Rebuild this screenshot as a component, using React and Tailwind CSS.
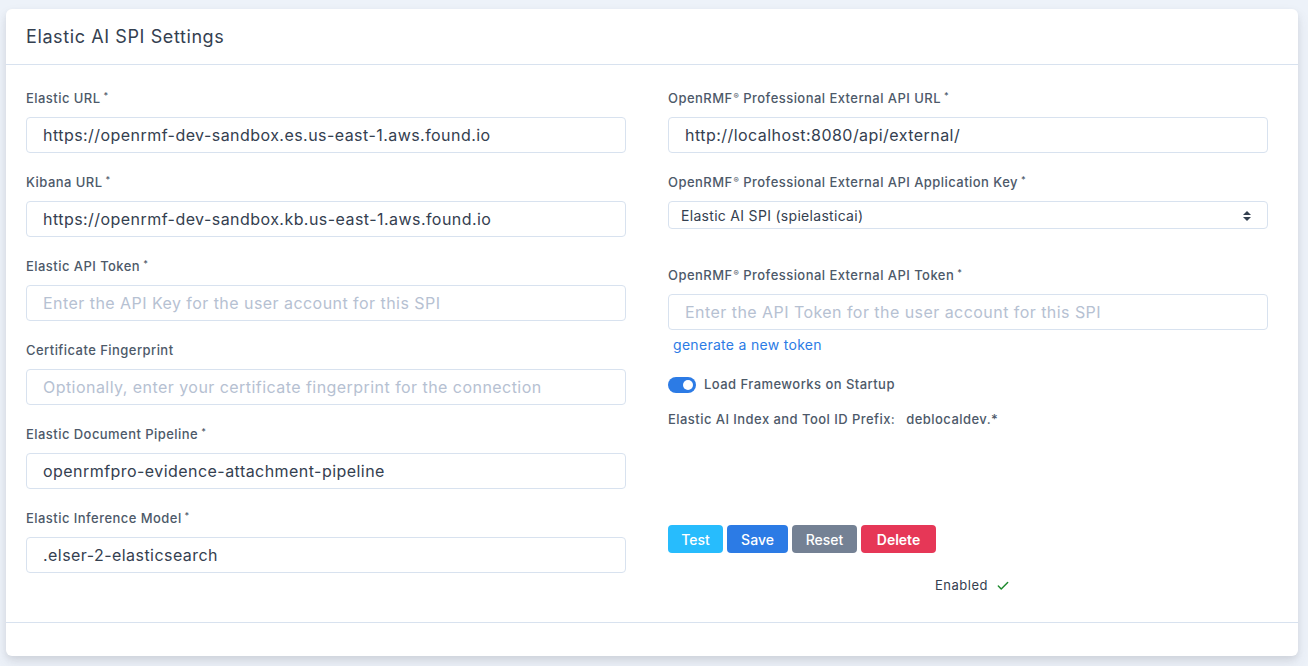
import { Check } from 'lucide-react';

const font = { fontFamily: 'Inter, "Noto Sans", sans-serif' };

function Label({ children, required }) {
  return (
    <label className="block h-[19px] pt-[1px] text-[13px] leading-[19px] font-medium tracking-[0.45px] text-[#4d5969] mb-[10px]">
      {children}
      {required && <sup className="ml-[3px] text-[9px]">*</sup>}
    </label>
  );
}

function Reg() {
  return <sup className="text-[8px] ml-[1px]">®</sup>;
}

function TextInput({ value, placeholder }) {
  return (
    <input
      type="text"
      defaultValue={value}
      placeholder={placeholder}
      className="block w-full h-[36px] rounded-[4px] border border-[#d8e2ef] bg-white px-[16px] text-[16px] tracking-[0.45px] text-[#344050] placeholder:text-[#b6c1d2] outline-none"
    />
  );
}

export default function App() {
  return (
    <div className="min-h-[666px] bg-[#edf2f9] pt-[9px] pl-[6px] pr-[10px] pb-[11px]" style={font}>
      <div className="w-[1292px] rounded-[6px] bg-white shadow-[0_7px_14px_0_rgba(65,69,88,0.1),0_3px_6px_0_rgba(0,0,0,0.07)]">
        <div className="h-[56px] flex items-center px-[20px] border-b border-[#d8e2ef]">
          <h5 className="text-[18px] font-normal tracking-[0.6px] text-[#344050]">Elastic AI SPI Settings</h5>
        </div>

        <div className="flex gap-[42px] pl-[20px] pt-[23px] h-[558px] border-b border-[#d8e2ef]">
          <div className="w-[600px] flex flex-col">
            <div className="mb-[19px]">
              <Label required>Elastic URL</Label>
              <TextInput value="https://openrmf-dev-sandbox.es.us-east-1.aws.found.io" />
            </div>
            <div className="mb-[19px]">
              <Label required>Kibana URL</Label>
              <TextInput value="https://openrmf-dev-sandbox.kb.us-east-1.aws.found.io" />
            </div>
            <div className="mb-[19px]">
              <Label required>Elastic API Token</Label>
              <TextInput placeholder="Enter the API Key for the user account for this SPI" />
            </div>
            <div className="mb-[19px]">
              <Label>Certificate Fingerprint</Label>
              <TextInput placeholder="Optionally, enter your certificate fingerprint for the connection" />
            </div>
            <div className="mb-[19px]">
              <Label required>Elastic Document Pipeline</Label>
              <TextInput value="openrmfpro-evidence-attachment-pipeline" />
            </div>
            <div>
              <Label required>Elastic Inference Model</Label>
              <TextInput value=".elser-2-elasticsearch" />
            </div>
          </div>

          <div className="w-[600px] flex flex-col">
            <div className="mb-[19px]">
              <Label required>
                OpenRMF<Reg /> Professional External API URL
              </Label>
              <TextInput value="http://localhost:8080/api/external/" />
            </div>
            <div>
              <Label required>
                OpenRMF<Reg /> Professional External API Application Key
              </Label>
              <div className="relative h-[28px] rounded-[4px] border border-[#d8e2ef] bg-white flex items-center pl-[12px] text-[14px] tracking-[0.3px] text-[#344050]">
                Elastic AI SPI (spielasticai)
                <svg className="absolute right-[16px] top-[9px]" width="8" height="10" viewBox="0 0 8 10">
                  <path d="M4 0 L8 4 H0 Z M0 6 H8 L4 10 Z" fill="#344050" />
                </svg>
              </div>
            </div>
            <div className="mt-[36px]">
              <Label required>
                OpenRMF<Reg /> Professional External API Token
              </Label>
              <TextInput placeholder="Enter the API Token for the user account for this SPI" />
            </div>
            <a className="block mt-[5px] ml-[5px] h-[20px] text-[14px] leading-[20px] tracking-[0.3px] text-[#2c7be5]">generate a new token</a>

            <div className="flex items-center mt-[20px] h-[20px]">
              <div className="w-[28px] h-[16px] rounded-full bg-[#2c7be5] flex items-center justify-end pr-[3px]">
                <div className="w-[10px] h-[10px] rounded-full bg-white" />
              </div>
              <span className="ml-[8px] text-[13px] font-medium tracking-[0.45px] text-[#4d5969]">Load Frameworks on Startup</span>
            </div>

            <div className="mt-[14px] h-[20px] text-[13px] leading-[20px] font-medium tracking-[0.45px] text-[#4d5969]">
              Elastic AI Index and Tool ID Prefix:<span className="ml-[11px]">deblocaldev.*</span>
            </div>

            <div className="flex gap-[4px] mt-[96px]">
              <button className="h-[28px] w-[55px] rounded-[4px] bg-[#27bcfd] text-white text-[14px] font-medium">Test</button>
              <button className="h-[28px] w-[61px] rounded-[4px] bg-[#2c7be5] text-white text-[14px] font-medium">Save</button>
              <button className="h-[28px] w-[65px] rounded-[4px] bg-[#748194] text-white text-[14px] font-medium">Reset</button>
              <button className="h-[28px] w-[75px] rounded-[4px] bg-[#e63757] text-white text-[14px] font-semibold">Delete</button>
            </div>

            <div className="flex items-center mt-[23px] pl-[267px] h-[20px]">
              <span className="text-[13px] tracking-[0.5px] text-[#344050]">Enabled</span>
              <Check className="ml-[8px] text-[#1e8a2e]" size={14} strokeWidth={2.5} />
            </div>
          </div>
        </div>

        <div className="h-[33px]" />
      </div>
    </div>
  );
}
